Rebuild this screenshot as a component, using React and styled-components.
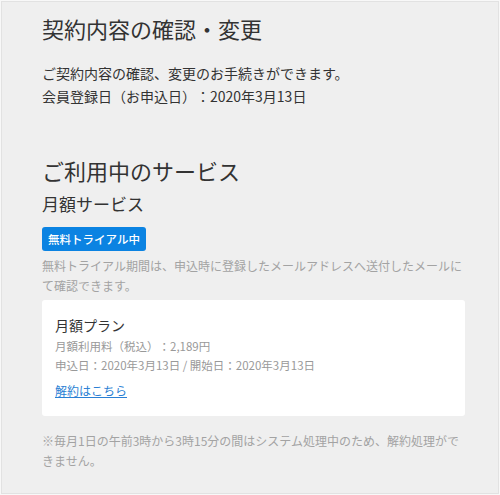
import React from "react";
import styled, { createGlobalStyle } from "styled-components";

const Global = createGlobalStyle`
  html, body { margin: 0; padding: 0; background: #efefef; }
  body {
    font-family: "Noto Sans CJK JP", "Noto Sans", sans-serif;
    color: #333;
    text-spacing-trim: space-all;
  }
`;

const Frame = styled.div`
  box-sizing: border-box;
  width: 500px;
  height: 495px;
  background: #efefef;
  border: 1px solid #f8f8f8;
  box-shadow: inset 0 0 0 1px #e2e2e2;
  overflow: hidden;
`;

const Main = styled.main`
  width: 423px;
  margin-left: 41px;
  padding-top: 12px;
  display: flex;
  flex-direction: column;
`;

const PageTitle = styled.h1`
  margin: 0;
  font-size: 22px;
  line-height: 30px;
  font-weight: 400;
  color: #333;
`;

const Lead = styled.p`
  margin: 19px 0 0;
  font-size: 14px;
  line-height: 23px;
  color: #333;
`;

const SectionTitle = styled.h2`
  margin: 47px 0 0;
  font-size: 22px;
  line-height: 30px;
  font-weight: 400;
  color: #333;
`;

const SubTitle = styled.h3`
  margin: 7px 0 0;
  font-size: 17px;
  line-height: 24px;
  font-weight: 400;
  color: #333;
`;

const Badge = styled.span`
  align-self: flex-start;
  margin-top: 11px;
  height: 24px;
  padding: 0 6px;
  display: inline-flex;
  align-items: center;
  background: #0b83e2;
  color: #fff;
  border-radius: 3px;
  font-size: 11.5px;
  font-weight: 500;
`;

const Note = styled.p`
  margin: ${(p) => p.$mt || 0}px 0 0;
  font-size: 12px;
  line-height: 20px;
  color: #a3a3a3;
`;

const Card = styled.section`
  margin-top: 4px;
  background: #fff;
  border-radius: 3px;
  padding: 15px 13px 16px;
  display: flex;
  flex-direction: column;
`;

const PlanName = styled.div`
  font-size: 14px;
  line-height: 20px;
  color: #333;
`;

const PlanInfo = styled.div`
  margin-top: ${(p) => p.$mt || 0}px;
  font-size: 11.5px;
  line-height: 19px;
  color: #999;
`;

const CancelLink = styled.a`
  align-self: flex-start;
  margin-top: 6px;
  font-size: 12px;
  line-height: 19px;
  color: #2a7fd4;
  text-decoration: underline;
`;

export default function App() {
  return (
    <>
      <Global />
      <Frame>
        <Main>
          <PageTitle>契約内容の確認・変更</PageTitle>
          <Lead>
            ご契約内容の確認、変更のお手続きができます。
            <br />
            会員登録日（お申込日）：2020年3月13日
          </Lead>
          <SectionTitle>ご利用中のサービス</SectionTitle>
          <SubTitle>月額サービス</SubTitle>
          <Badge>無料トライアル中</Badge>
          <Note $mt={5}>
            無料トライアル期間は、申込時に登録したメールアドレスへ送付したメールにて確認できます。
          </Note>
          <Card>
            <PlanName>月額プラン</PlanName>
            <PlanInfo $mt={2}>月額利用料（税込）：2,189円</PlanInfo>
            <PlanInfo>申込日：2020年3月13日 / 開始日：2020年3月13日</PlanInfo>
            <CancelLink href="#">解約はこちら</CancelLink>
          </Card>
          <Note $mt={15}>
            ※毎月1日の午前3時から3時15分の間はシステム処理中のため、解約処理ができません。
          </Note>
        </Main>
      </Frame>
    </>
  );
}
